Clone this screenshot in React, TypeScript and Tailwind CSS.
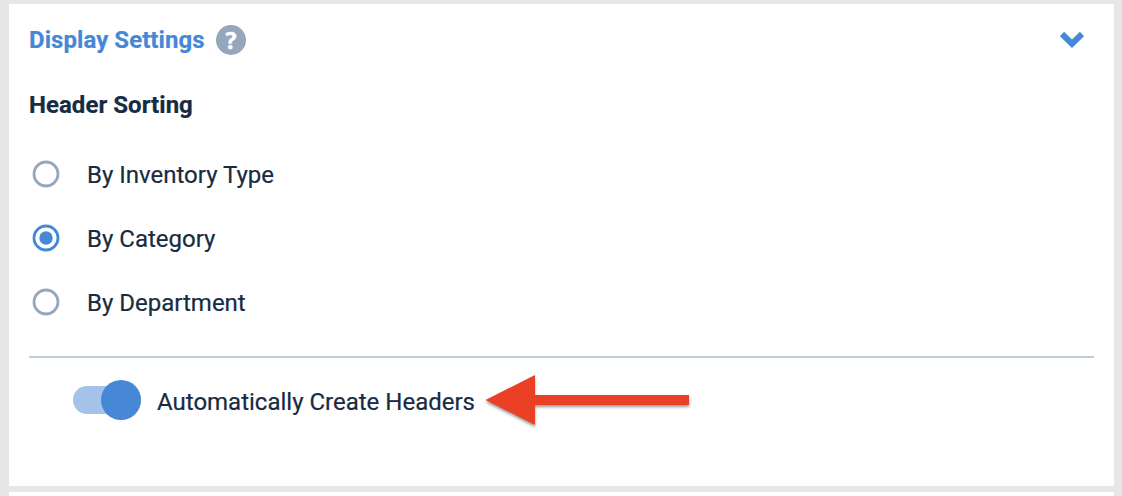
import { useState } from 'react'
import clsx from 'clsx'

const SORT_OPTIONS = [
  { value: 'inventory', label: 'By Inventory Type' },
  { value: 'category', label: 'By Category' },
  { value: 'department', label: 'By Department' },
]

interface RadioRowProps {
  label: string
  checked: boolean
  onSelect: () => void
}

function RadioRow({ label, checked, onSelect }: RadioRowProps) {
  return (
    <button
      type="button"
      role="radio"
      aria-checked={checked}
      onClick={onSelect}
      className="flex h-16 items-center gap-[27px] pl-[3px] text-left"
    >
      <svg
        viewBox="0 0 28 28"
        fill="none"
        className={clsx('size-7', checked ? 'text-[#4688d6]' : 'text-[#94a7bd]')}
      >
        <circle cx="14" cy="14" r="12" stroke="currentColor" strokeWidth="2.8" />
        {checked && <circle cx="14" cy="14" r="6.7" fill="currentColor" />}
      </svg>
      <span className="pt-0.5">{label}</span>
    </button>
  )
}

export default function App() {
  const [sorting, setSorting] = useState('category')
  const [autoHeaders, setAutoHeaders] = useState(true)

  return (
    <div className="flex h-screen flex-col gap-1.5 overflow-hidden bg-[#e6e7e8] pt-1 pr-2 pl-[9px] font-['Roboto',sans-serif] text-2xl text-[#172b42] [-webkit-text-stroke:0.2px]">
      <section className="h-[482px] shrink-0 bg-white px-5">
        {/* Header */}
        <div className="flex h-[72px] items-center justify-between pr-[9px]">
          <div className="flex items-center">
            <h2 className="w-[187px] font-bold tracking-[0.06px] whitespace-nowrap text-[#4688d6]">Display Settings</h2>
            <span className="flex size-[30px] items-center justify-center rounded-full bg-[#94a7bd] font-['Open_Sans',sans-serif] text-[23px] leading-[30px] font-bold text-white [-webkit-text-stroke:0.5px]">
              ?
            </span>
          </div>
          <svg width="26" height="18" viewBox="0 0 26 18" fill="none">
            <path d="M3 3L13 12.7L23 3" stroke="#4688d6" strokeWidth="6" />
          </svg>
        </div>

        {/* Header sorting */}
        <h3 className="flex h-[58px] items-center font-bold tracking-[0.04px]">Header Sorting</h3>
        <div role="radiogroup" className="mt-2 flex flex-col">
          {SORT_OPTIONS.map((option) => (
            <RadioRow
              key={option.value}
              label={option.label}
              checked={sorting === option.value}
              onSelect={() => setSorting(option.value)}
            />
          ))}
        </div>

        <div className="mt-[22px] h-0.5 bg-[#c1ced9]" />

        {/* Auto headers toggle */}
        <div className="flex h-[84px] items-center pl-11">
          <button
            type="button"
            role="switch"
            aria-checked={autoHeaders}
            onClick={() => setAutoHeaders(!autoHeaders)}
            className={clsx(
              'flex h-7 w-[68px] items-center rounded-full',
              autoHeaders ? 'justify-end bg-[#a3c3ea]' : 'justify-start bg-[#c1ced9]'
            )}
          >
            <span
              className={clsx('size-10 shrink-0 rounded-full', autoHeaders ? 'bg-[#4688d6]' : 'bg-[#94a7bd]')}
            />
          </button>
          <span className="ml-4 w-[328px] pt-1 whitespace-nowrap">Automatically Create Headers</span>
          <svg
            width="204"
            height="50"
            viewBox="0 0 204 50"
            className="overflow-visible drop-shadow-[0_2px_1.5px_rgba(0,0,0,0.4)]"
          >
            <path d="M0.5 25L50 0V20H204V30H50V50Z" fill="#ea4025" />
          </svg>
        </div>
      </section>

      <section className="h-10 shrink-0 bg-white" />
    </div>
  )
}
